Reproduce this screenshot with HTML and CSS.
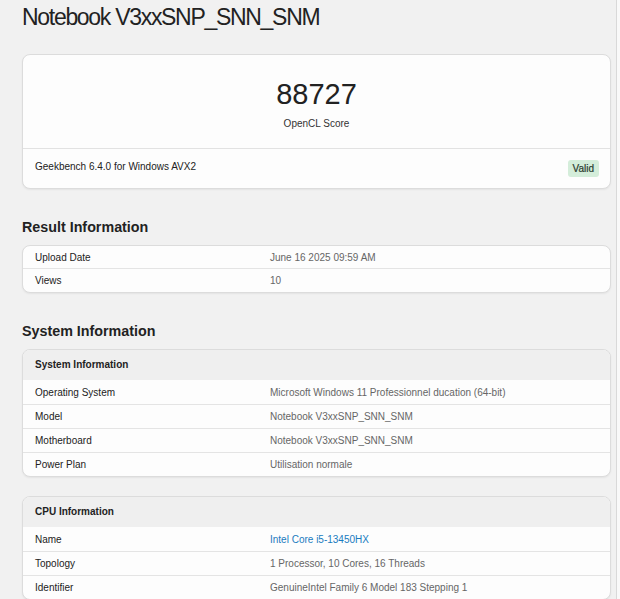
FILE: index.html
```html
<!DOCTYPE html>
<html>
<head>
<meta charset="utf-8">
<link rel="stylesheet" href="styles.css">
</head>
<body>
<div class="page">
  <h1 class="title">Notebook V3xxSNP_SNN_SNM</h1>
  <div class="card score-card">
    <div class="score-main">
      <div class="score">88727</div>
      <div class="score-label">OpenCL Score</div>
    </div>
    <div class="score-foot">
      <span>Geekbench 6.4.0 for Windows AVX2</span>
      <span class="badge">Valid</span>
    </div>
  </div>

  <h2 class="section">Result Information</h2>
  <div class="card table">
    <div class="row"><div class="k">Upload Date</div><div class="v">June 16 2025 09:59 AM</div></div>
    <div class="row"><div class="k">Views</div><div class="v">10</div></div>
  </div>

  <h2 class="section">System Information</h2>
  <div class="card table">
    <div class="thead">System Information</div>
    <div class="row"><div class="k">Operating System</div><div class="v">Microsoft Windows 11 Professionnel ducation (64-bit)</div></div>
    <div class="row"><div class="k">Model</div><div class="v">Notebook V3xxSNP_SNN_SNM</div></div>
    <div class="row"><div class="k">Motherboard</div><div class="v">Notebook V3xxSNP_SNN_SNM</div></div>
    <div class="row"><div class="k">Power Plan</div><div class="v">Utilisation normale</div></div>
  </div>

  <div class="card table cpu">
    <div class="thead">CPU Information</div>
    <div class="row"><div class="k">Name</div><div class="v link">Intel Core i5-13450HX</div></div>
    <div class="row"><div class="k">Topology</div><div class="v">1 Processor, 10 Cores, 16 Threads</div></div>
    <div class="row"><div class="k">Identifier</div><div class="v">GenuineIntel Family 6 Model 183 Stepping 1</div></div>
  </div>
</div>
</body>
</html>
```
FILE: styles.css
```css
html, body {
  margin: 0;
  padding: 0;
  background: #f9f9f9;
  font-family: "Liberation Sans", Arial, sans-serif;
  color: #222;
}
.page {
  width: 589px;
  padding: 0 5px 0 22px;
  min-height: 599px;
  background: #f1f1f1;
  border-right: 1px solid #d9d9d9;
  overflow: hidden;
}
.title {
  margin: 0;
  padding-top: 4px;
  height: 50px;
  font-size: 23px;
  font-weight: normal;
  line-height: 27px;
  color: #222;
  letter-spacing: -1.3px;
}
.card {
  background: #fdfdfd;
  border: 1px solid #dcdcdc;
  border-radius: 8px;
  box-shadow: 0 1px 2px rgba(0,0,0,0.06);
  overflow: hidden;
}
.score-card {
  height: 133px;
  display: flex;
  flex-direction: column;
}
.score-main {
  height: 93px;
  border-bottom: 1px solid #e2e2e2;
  text-align: center;
}
.score {
  font-size: 29px;
  line-height: 34px;
  padding-top: 22px;
  color: #222;
}
.score-label {
  font-size: 10px;
  margin-top: 7px;
  color: #333;
}
.score-foot {
  flex: 1;
  display: flex;
  justify-content: space-between;
  align-items: flex-start;
  padding: 12px 11px 0 12px;
  font-size: 10px;
  color: #222;
}
.badge {
  background: #d4edda;
  color: #2a3a2e;
  font-size: 10px;
  padding: 3px 5px;
  border-radius: 3px;
  margin-top: -1px;
  -webkit-text-stroke: 0.2px #2a3a2e;
}
.section {
  margin: 0;
  font-size: 14.3px;
  font-weight: bold;
  color: #222;
  padding-top: 29px;
  height: 27px;
  line-height: 18px;
}
.row {
  display: flex;
  box-sizing: border-box;
  height: 24px;
  align-items: center;
  font-size: 10px;
  border-top: 1px solid #e4e4e4;
}
.row:first-child { border-top: none; height: 22px; }
.thead + .row { border-top: none; }
.k {
  width: 235px;
  padding-left: 12px;
  color: #222;
}
.v {
  color: #666;
}
.v.link { color: #1a7bbf; }
.thead {
  height: 30px;
  line-height: 30px;
  background: #efefef;
  font-size: 10px;
  font-weight: bold;
  padding-left: 12px;
  color: #222;
}
.cpu { margin-top: 19px; }
```
